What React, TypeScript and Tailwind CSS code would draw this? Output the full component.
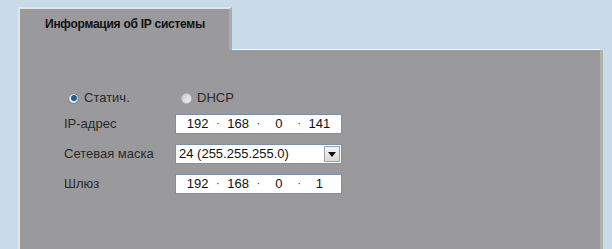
import React from "react";

function IpField({ parts }: { parts: string[] }) {
  return (
    <div className="flex h-[20px] w-[167px] items-center border border-[#7a8fa8] bg-white px-[3px] text-[13px] text-[#111]">
      {parts.map((p, i) => (
        <React.Fragment key={i}>
          <span className="flex-1 text-center">{p}</span>
          {i < parts.length - 1 && <span className="text-[10px] leading-none">·</span>}
        </React.Fragment>
      ))}
    </div>
  );
}

function Radio({ checked }: { checked: boolean }) {
  return checked ? (
    <span className="flex h-[11px] w-[11px] items-center justify-center rounded-full border border-[#6f7f8c] bg-[#e4e8ec]">
      <span className="h-[6px] w-[6px] rounded-full bg-[#1f5f92]" />
    </span>
  ) : (
    <span className="h-[11px] w-[11px] rounded-full border border-[#b8b8b8] bg-gradient-to-br from-[#c8c8c8] to-[#f4f4f4]" />
  );
}

export default function App() {
  return (
    <div
      className="h-[249px] w-[612px] overflow-hidden bg-[#c9dbe9] pl-[18px] pr-[9px] pt-[7px]"
      style={{ fontFamily: '"Liberation Sans", Arial, sans-serif' }}
    >
      {/* вкладка */}
      <div className="flex">
        <div className="h-[43px] w-[214px] border-l-2 border-r-[3px] border-t-2 border-l-[#e4e4e4] border-r-[#ababab] border-t-[#e4e4e4] bg-[#9a999b] pl-[25px] pt-[6px] text-[12px] font-bold tracking-[-0.25px] text-[#111]">
          Информация об IP системы
        </div>
        <div className="flex flex-1 flex-col justify-end">
          <div className="mr-[3px] border-b border-white" />
        </div>
      </div>

      {/* панель */}
      <div className="h-[220px] border-l-2 border-r-[3px] border-l-[#e4e4e4] border-r-[#b2b2b2] bg-[#9a999b] pl-[44px] pt-[40px] text-[13px] text-[#2a2a2a]">
        <div className="flex h-[16px] items-center">
          <div className="ml-[4px] flex w-[113px] items-center gap-[5px]">
            <Radio checked />
            <span>Статич.</span>
          </div>
          <div className="flex items-center gap-[5px]">
            <Radio checked={false} />
            <span>DHCP</span>
          </div>
        </div>

        <div className="mt-[8px] flex flex-col gap-[10px]">
          <div className="flex items-center">
            <span className="w-[111px]">IP-адрес</span>
            <IpField parts={["192", "168", "0", "141"]} />
          </div>
          <div className="flex items-center">
            <span className="w-[111px]">Сетевая маска</span>
            <div className="flex h-[20px] w-[167px] items-center border border-[#7a8fa8] bg-white pl-[3px] text-[13px] text-[#111]">
              <span className="flex-1">24 (255.255.255.0)</span>
              <span className="mr-[1px] flex h-[16px] w-[16px] items-center justify-center border border-[#9aa3ad] bg-gradient-to-b from-[#f4f4f4] to-[#d9d9d9]">
                <svg width="8" height="5" viewBox="0 0 8 5">
                  <path d="M0 0h8L4 5z" fill="#111" />
                </svg>
              </span>
            </div>
          </div>
          <div className="flex items-center">
            <span className="w-[111px]">Шлюз</span>
            <IpField parts={["192", "168", "0", "1"]} />
          </div>
        </div>
      </div>
    </div>
  );
}
